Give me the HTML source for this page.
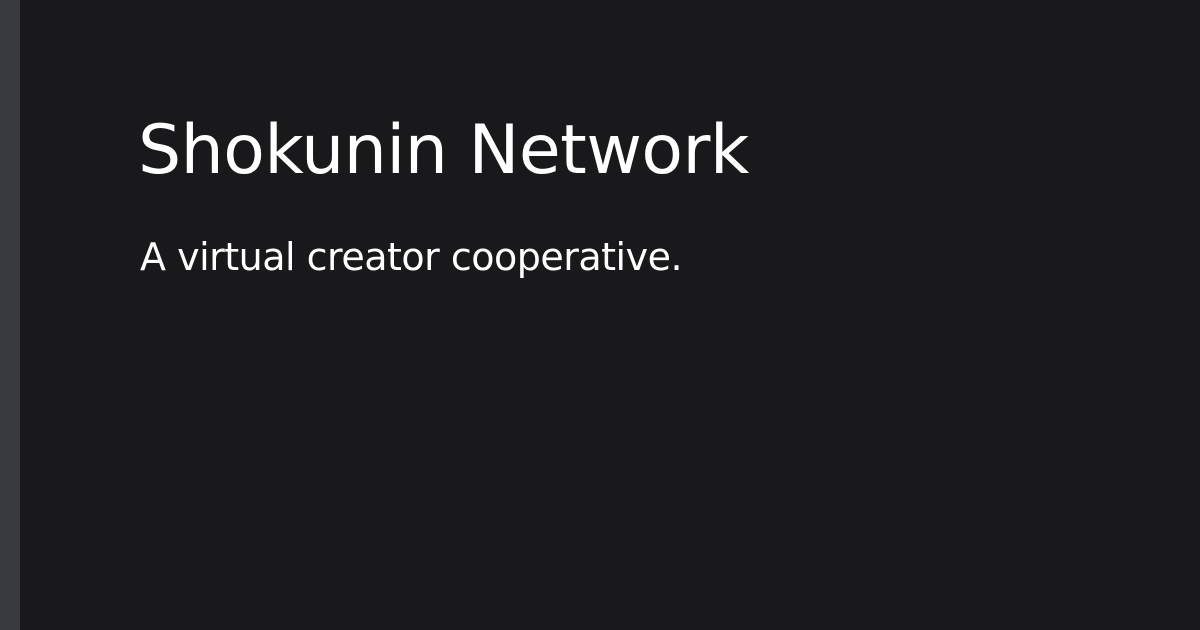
<!DOCTYPE html>
<html><head><style>
html,body{margin:0;padding:0;width:1200px;height:630px;overflow:hidden;background:#19191b;}
.bar{position:absolute;left:0;top:0;width:20px;height:630px;background:#393a3f;}
h1{position:absolute;left:138px;top:101px;margin:0;font-family:"DejaVu Sans","Liberation Sans",sans-serif;font-weight:normal;font-size:68px;color:#fff;line-height:100px;white-space:nowrap;letter-spacing:-0.5px}
p{position:absolute;left:140px;top:232px;margin:0;font-family:"DejaVu Sans","Liberation Sans",sans-serif;font-size:38px;color:#fff;line-height:50px;white-space:nowrap;letter-spacing:-0.5px}
</style></head><body>
<div class="bar"></div>
<h1>Shokunin Network</h1>
<p>A virtual creator cooperative.</p>
</body></html>
